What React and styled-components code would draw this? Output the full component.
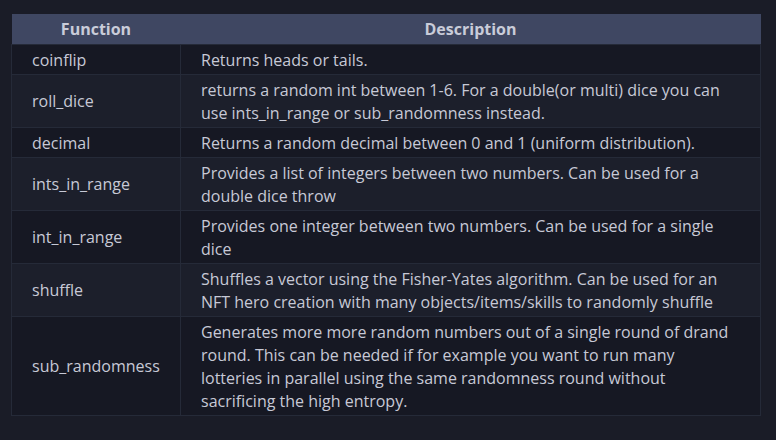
import styled, { createGlobalStyle } from 'styled-components'

const rows = [
  { name: 'coinflip', desc: 'Returns heads or tails.' },
  { name: 'roll_dice', desc: 'returns a random int between 1-6. For a double(or multi) dice you can use ints_in_range or sub_randomness instead.' },
  { name: 'decimal', desc: 'Returns a random decimal between 0 and 1 (uniform distribution).' },
  { name: 'ints_in_range', desc: 'Provides a list of integers between two numbers. Can be used for a double dice throw' },
  { name: 'int_in_range', desc: 'Provides one integer between two numbers. Can be used for a single dice' },
  { name: 'shuffle', desc: 'Shuffles a vector using the Fisher-Yates algorithm. Can be used for an NFT hero creation with many objects/items/skills to randomly shuffle' },
  { name: 'sub_randomness', desc: 'Generates more more random numbers out of a single round of drand round. This can be needed if for example you want to run many lotteries in parallel using the same randomness round without sacrificing the high entropy.' },
]

const App = () => {
  return (
    <>
      <GlobalStyle />
      <Page>
        <Table>
          <colgroup>
            <col style={{ width: 169 }} />
            <col />
          </colgroup>
          <thead>
            <tr>
              <Th>Function</Th>
              <Th>Description</Th>
            </tr>
          </thead>
          <tbody>
            {rows.map((row, i) => (
              <Row key={row.name} $odd={i % 2 === 1}>
                <Td>{row.name}</Td>
                <Td>{row.desc}</Td>
              </Row>
            ))}
          </tbody>
        </Table>
      </Page>
    </>
  )
}

export default App

const GlobalStyle = createGlobalStyle`
  body {
    margin: 0;
    background: #1a1c27;
    font-family: "Open Sans", "Liberation Sans", sans-serif;
  }
`
const Page = styled.div`
  width: 776px;
  height: 440px;
  padding: 14px 0 0 11px;
  box-sizing: border-box;
  background: #1a1c27;
`
const Table = styled.table`
  width: 750px;
  border-collapse: collapse;
  table-layout: fixed;
  font-size: 16px;
  line-height: 23px;
  color: #c7c9d6;
`
const Th = styled.th`
  background: #3f4762;
  color: #c9ccd9;
  font-weight: 700;
  text-align: center;
  height: 30px;
  padding: 2px 20px 0;
  box-sizing: border-box;
`
const Row = styled.tr`
  background: ${p => (p.$odd ? '#1c1f2b' : '#161823')};
`
const Td = styled.td`
  border: 1px solid #252a38;
  padding: 4px 30px 2px 20px;
  vertical-align: middle;
  text-align: left;
`
